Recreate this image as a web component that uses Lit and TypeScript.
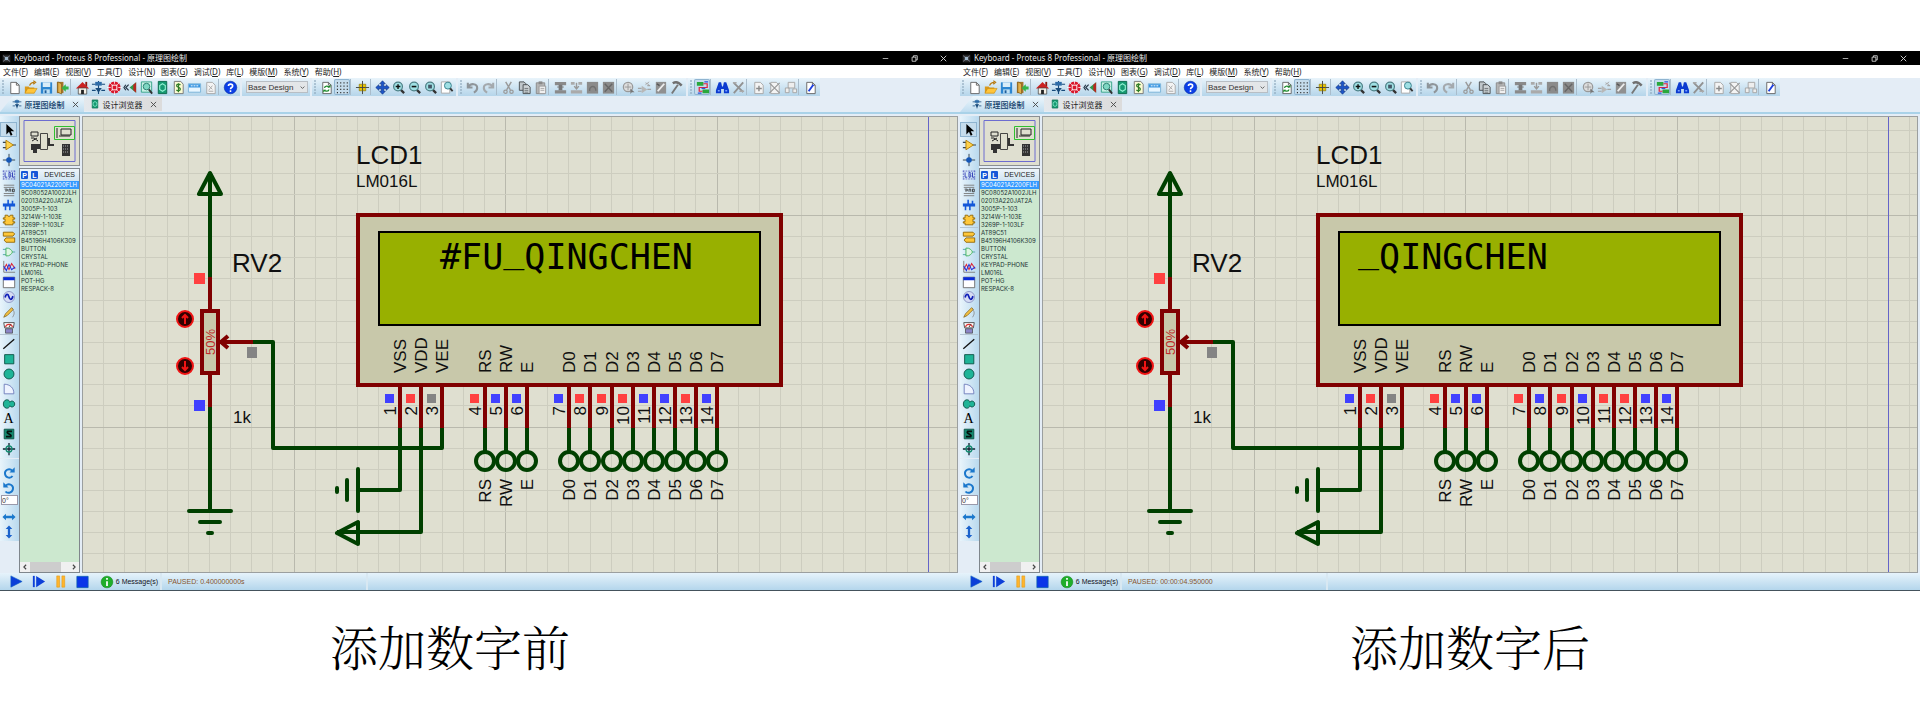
import { LitElement, html, svg, css, nothing } from "lit";
import { customElement, property } from "lit/decorators.js";

const page = svg`<path d="M4 2.5h6l3 3v9H4z" fill="#fff" stroke="#666"/><path d="M10 2.5v3h3" fill="none" stroke="#666"/>`;
const greyPage = svg`<path d="M4 2.5h6l3 3v9H4z" fill="#f4f4f4" stroke="#a8a8a8"/>`;
const lens = (inner: unknown) => svg`<path d="M10 10l4 4" stroke="#333" stroke-width="2.4"/><circle cx="7.500" cy="7" r="4.700" fill="#9fe0e4" stroke="#4d7f86" stroke-width="1.300"/>${inner}`;
const block = (inner: unknown) => svg`<path d="M2 2h12v3.500H2zM2 11h12v3.500H2z" fill="#8a8a8a"/>${inner}`;

const icons: Record<string, unknown> = {
  new: page,
  open: svg`<path d="M2 7h4l1 1h5v6H2z" fill="#d99a1c"/><path d="M2 14l3-5h10l-3 5z" fill="#ffc53a" stroke="#c58a10" stroke-width=".6"/><path d="M7 6c1-3 3-3.500 5-3.500M11 .8l2.500 1.700L11 4.500" fill="none" stroke="#b87a10" stroke-width="1.200"/>`,
  save: svg`<path d="M2 2.500h12v12H2z" fill="#2c86d0"/><path d="M4 2.500h8v5H4z" fill="#d7ecf8"/><path d="M4.500 10h7v4.500h-7z" fill="#bfe0f3"/><path d="M6 11h2v3H6z" fill="#1c5f9c"/>`,
  exit: svg`<path d="M2 2h7v12H2z" fill="#a5762a"/><path d="M3 2l4 2v11l-4-2z" fill="#e3b04a" stroke="#6f4d12" stroke-width=".6"/><path d="M14.500 7h-3V4.500L7 8.500l4.500 4V10h3z" fill="#35b54a"/>`,
  home: svg`<path d="M11 2h2v5h-2z" fill="#8b1a10"/><path d="M1 9l7-7 7 7z" fill="#c22"/><path d="M3.500 8.500h9V15h-9z" fill="#f5f0e6" stroke="#444" stroke-width=".8"/><path d="M6.500 10.500h3V15h-3z" fill="#222"/>`,
  schematic: svg`<path d="M8 1v14M1 4.500h4M11 4.500h4M1 11h4M11 11h4" stroke="#174a7a" stroke-width="1.200"/><path d="M4.500 2h7v4h-7z" fill="#2d6ca8"/><path d="M4.500 8.500h7L8 13.500z" fill="#174a7a"/>`,
  pcb: svg`<circle cx="8" cy="8" r="6.500" fill="#d9162a"/><path d="M5 5h6v6H5z" fill="#fff"/><path d="M6 6h4v4H6z" fill="#d9162a"/><path d="M8 0v4M8 12v4M0 8h4M12 8h4M3 3l2 2M13 3l-2 2M3 13l2-2M13 13l-2-2" stroke="#fff" stroke-width=".8"/>`,
  view3d: svg`<path d="M7 8l7-5.500v11z" fill="#2f9b4a"/><path d="M11 5l3-2.500v11L11 11z" fill="#b52a22"/><path d="M6 5L3 8l3 3M3 5L1 8l2 3" fill="none" stroke="#234" stroke-width="1.200"/>`,
  gerber: svg`<path d="M2.500 2h11v11h-11z" fill="#c8f0e4" stroke="#38a48a"/><circle cx="8" cy="7" r="3.500" fill="#7fd7c2" stroke="#2b7f72"/><path d="M10.500 10l3.500 4.500" stroke="#333" stroke-width="2"/>`,
  explorer: svg`<path d="M3.500 1.500h9v13h-9z" fill="#159a72" stroke="#0b6b4d"/><path d="M8 4l3 2v4l-3 2-3-2V6z" fill="none" stroke="#90f0d0" stroke-width="1.200"/>`,
  bom: svg`<path d="M3.500 1.500h7l2.500 3v10H3.500z" fill="#fbfbd4" stroke="#777"/><path d="M10 5.500C9 4 6 4.200 6 6s4 1.500 4 3.700S7 12 5.800 10.500M8 3.500v9.500" fill="none" stroke="#2f7d26" stroke-width="1.300"/>`,
  serial: svg`<path d="M1.500 4h13v9h-13z" fill="#e8f6ff" stroke="#7ab2d8"/><path d="M2 4.500h12v3.500H2z" fill="#3895e0"/><path d="M4 6.200h2M7 6.200h2M10 6.200h2" stroke="#fff"/>`,
  notes: svg`${greyPage}<path d="M6 6l4 4M10 6l-4 5M6 12h5" stroke="#aaa"/>`,
  help: svg`<circle cx="8" cy="8" r="6.700" fill="#0a3fe8" stroke="#042a9c" stroke-width=".6"/><path d="M5.800 6.500C5.800 3.600 10.300 3.800 10.300 6.300 10.300 8 8 8 8 9.800M8 11v1.800" fill="none" stroke="#fff" stroke-width="1.700"/>`,
  refresh: svg`${page}<path d="M6 8.500C6 6 10 6 10.500 8M10.500 10C10.500 12.500 6.500 12.500 6 10.500" fill="none" stroke="#1d8a2c" stroke-width="1.400"/><path d="M9 8h3.300v-3zM7.500 10.500H4.500v3z" fill="#1d8a2c"/>`,
  grid: svg`<path d="M2 3h12M2 6.500h12M2 10h12M2 13.500h12" stroke="#333" stroke-width="1.200" stroke-dasharray="1.200 2.300"/>`,
  origin: svg`<path d="M8 1v14M1 8h14" stroke="#444"/><path d="M4.500 4.500h7v7h-7z" fill="#e8c400" stroke="#7d6a00" stroke-width=".6"/><path d="M8 4.500v7M4.500 8h7" stroke="#444"/>`,
  pan: svg`<path d="M8 .8l3 3.200H9.300v2.700H12V5l3.200 3L12 11V9.300H9.300V12H11l-3 3.200L5 12h1.700V9.300H4V11L.8 8 4 5v1.700h2.700V4H5z" fill="#1c56c8" stroke="#0a2b78" stroke-width=".6"/>`,
  zoomIn: lens(svg`<path d="M5 7h5M7.500 4.500v5" stroke="#111" stroke-width="1.500"/>`),
  zoomOut: lens(svg`<path d="M5 7h5" stroke="#111" stroke-width="1.700"/>`),
  zoomAll: lens(svg`<path d="M5.500 5h4v4h-4z" fill="#456"/>`),
  zoomArea: svg`<path d="M2.500 2h9v12h-9z" fill="#fff" stroke="#aaa"/><circle cx="9.500" cy="6" r="3.700" fill="#9fe0e4" stroke="#37808c"/><path d="M12 9l2.500 3" stroke="#333" stroke-width="2"/>`,
  undo: svg`<path d="M3 3v5h5M3.500 7.500C6 3 13 3.500 13 8.500 13 11 11 12.500 9.500 13.500" fill="none" stroke="#8f959a" stroke-width="2.200"/>`,
  redo: svg`<path d="M13 3v5H8M12.500 7.500C10 3 3 3.500 3 8.500 3 11 5 12.500 6.500 13.500" fill="none" stroke="#a4a9ad" stroke-width="2.200"/>`,
  cut: svg`<path d="M5 2l5 8.500M11 2L6 10.500" stroke="#9a9a9a" stroke-width="1.500"/><circle cx="4.800" cy="12.500" r="1.800" fill="none" stroke="#9a9a9a" stroke-width="1.300"/><circle cx="11.200" cy="12.500" r="1.800" fill="none" stroke="#9a9a9a" stroke-width="1.300"/>`,
  copy: svg`<path d="M2.500 2h5l2 2v7h-7z" fill="#bfc6ca" stroke="#4a4f52"/><path d="M6.500 5h5l2.500 2.500v7H6.500z" fill="#cdd3d6" stroke="#4a4f52"/><path d="M8 9h4M8 11h4M8 13h4" stroke="#5a5f62" stroke-width=".8"/>`,
  paste: svg`<path d="M3.500 3h9v11.500h-9z" fill="#b5b5b5" stroke="#8c8c8c"/><path d="M6 1.500h4v3H6z" fill="#888"/><path d="M6.500 6.500h7v8h-7z" fill="#f0f0f0" stroke="#999"/><path d="M8 9h4M8 11h4" stroke="#aaa"/>`,
  blockCopy: block(svg`<path d="M6 5h4v6H6z" fill="#777"/><path d="M4.500 7.500h7" stroke="#777"/>`),
  blockMove: svg`<path d="M2 2h4v3H2zM10 2h4v3h-4zM2 11h12v3.500H2z" fill="#aaa"/><path d="M8 3v6M5.500 6.500L8 9.500l2.500-3" fill="none" stroke="#999" stroke-width="1.500"/>`,
  blockRotate: svg`<path d="M2 2h12v12.500H2z" fill="#8b8b8b"/><path d="M5 11.500C4 6 12 5 11.500 11.500" fill="none" stroke="#707070" stroke-width="1.500"/>`,
  blockDelete: svg`<path d="M2 2h12v12.500H2z" fill="#8b8b8b"/><path d="M4 4l8 8.500M12 4l-8 8.500" stroke="#666" stroke-width="1.500"/>`,
  pick: svg`<circle cx="7.500" cy="7.500" r="5" fill="#ddd" stroke="#999" stroke-width="1.300"/><path d="M4 7.500h7M7.500 4v7" stroke="#999"/><path d="M10 9l4.500 4h-3l-1.500 2z" fill="#777"/>`,
  makeDevice: svg`<path d="M1 9h4M1 12h4M11 10h4M11 6h3" stroke="#a5a5a5" stroke-width="1.300"/><path d="M5 6l6 4-6 4z" fill="#b8b8b8"/><path d="M9 5l4-3M9 3l4 2" stroke="#aaa"/>`,
  packaging: svg`<path d="M3 2h11v12.500H3z" fill="#909090"/><path d="M5 12l7-8" stroke="#eee" stroke-width="2"/><path d="M4 4l3 2" stroke="#555" stroke-width="1.500"/>`,
  decompose: svg`<path d="M4 3.500C8 1 11 3 13.500 6" fill="none" stroke="#707070" stroke-width="2.600"/><path d="M9.500 5L3 14.500" stroke="#777" stroke-width="2"/>`,
  autoroute: svg`<path d="M2 2h7v4H2zM8 10h7v4H8z" fill="#29a83c"/><path d="M9 4h4v4H4.500v4H8" fill="none" stroke="#e0233c" stroke-width="1.300"/><path d="M3 14h4M10 2h4M11 9H7" stroke="#2b56dc" stroke-width="1.300"/>`,
  search: svg`<path d="M4 2.500h2.500L7.500 7h1L9.500 2.500H12l3 8.500v3H9.500V9.500h-3V14H1v-3z" fill="#0c3bd0"/><path d="M3 11.500h2M11 11.500h2" stroke="#7fa4ff" stroke-width="1.500"/>`,
  property: svg`<path d="M3 3l10 10M13 2.500L3 14" stroke="#929292" stroke-width="2"/><path d="M2 3h4M9 12h5" stroke="#aaa" stroke-width="1.500"/>`,
  sheetNew: svg`${greyPage}<path d="M5.500 9h6M8.500 6v6" stroke="#8a8a8a" stroke-width="1.500"/>`,
  sheetDelete: svg`${greyPage}<path d="M2.500 3l11 11M13.500 3l-11 11" stroke="#999" stroke-width="1.300"/>`,
  sheetExit: svg`<path d="M5.500 2.500h7v6h-7zM2.500 8.500h4v5h-4zM10.500 9.500h4v4h-4z" fill="#eee" stroke="#a5a5a5"/>`,
  rules: svg`${page}<path d="M6 12l5-7" stroke="#1c3fe0" stroke-width="2"/>`,

  select: svg`<path d="M5 1v12l3-3 2 4.500 2-1L10 9.500h4z" fill="#000"/>`,
  component: svg`<path d="M1 5h4M1 11h4M12 8h4" stroke="#345" stroke-width="1.200"/><path d="M4.500 2.500L13 8l-8.500 5.500z" fill="#ffd24a" stroke="#b07a00"/>`,
  junction: svg`<path d="M8 1v14M1 8h14" stroke="#234"/><circle cx="8" cy="8" r="3.200" fill="#1357b8"/>`,
  label: svg`<path d="M1 3.500h14M1 12.500h14M1.500 3v10M14.500 3v10" stroke="#5a62c4" stroke-dasharray="2 1"/><path d="M3.500 5v5.500h2.500M8 5v5.500h1.500l.8-1.300-.8-1.500.6-1.300L9.300 5zM12 5v5.500h2" fill="none" stroke="#3440b8" stroke-width="1.100"/>`,
  script: svg`<path d="M2 2.500h12M2 5h12M2 12h12M2 14.500h12" stroke="#777"/><path d="M3 7h3v2H3.500M8 10V7h2v3M12 7h2v3h-2z" fill="none" stroke="#333"/>`,
  bus: svg`<path d="M1 8h14" stroke="#1458d8" stroke-width="3.500"/><path d="M4 8v6M9 8v6M7 2v6M12 3v5" stroke="#1458d8" stroke-width="1.800"/>`,
  subcircuit: svg`<path d="M3.500 2.500h3c0 2 3 2 3 0h3v3h2v1.500h-2v3h2v1.500h-2v2h-9v-2h-2V10h2V7h-2V5.500h2z" fill="#ffc83a" stroke="#8f6400"/>`,
  terminal: svg`<path d="M1.500 2.500h11l2 2-2 2.500h-11zM4.500 9h10v5h-10l-2-2.500z" fill="#ffc83a" stroke="#8f6400"/>`,
  pin: svg`<path d="M1 5h4M1 11h4M12 8h3" stroke="#5aa" stroke-width="1.100"/><path d="M4.500 3.500C9 3 11 6 12 8c-1 2-3 5-7.500 4.500z" fill="#dff5e4" stroke="#3cae58"/>`,
  graph: svg`<path d="M2 1v13h13" fill="none" stroke="#777"/><path d="M2 11l3-6 3 6 3-7 4 6" fill="none" stroke="#d23" stroke-width="1.200"/><path d="M2 7l3 5 3-7 3 6 4-3" fill="none" stroke="#23d" stroke-width="1.200"/>`,
  popup: svg`<path d="M1.500 2.500h13v12h-13z" fill="#fff" stroke="#666"/><path d="M1.500 2.500h13V6h-13z" fill="#0a2cd8"/>`,
  generator: svg`<circle cx="8" cy="8" r="6.300" fill="#d6dcf4" stroke="#8892c0"/><path d="M3.500 8.500C5 3.500 7 4.500 8 8s3 4 4.500-1" fill="none" stroke="#1020b8" stroke-width="2"/>`,
  probe: svg`<path d="M2 14l2-4 7-7 2 2-7 7z" fill="#f4c040" stroke="#7a5a10" stroke-width=".8"/><path d="M12 5c3 3 2 6 0 9" fill="none" stroke="#888"/>`,
  instrument: svg`<path d="M2 3h12l-1 6H3z" fill="#fff" stroke="#444"/><path d="M4 8C5 4 11 4 12 8" fill="none" stroke="#d33" stroke-width="1.200"/><path d="M4 10h8v5H4z" fill="#8c86c8" stroke="#444" stroke-width=".8"/><path d="M8 8l2-3" stroke="#222"/>`,
  line: svg`<path d="M1.500 13.500L14 2.500" stroke="#111" stroke-width="1.500"/>`,
  square: svg`<path d="M3 3h10.500v10.500H3z" fill="#1fb497" stroke="#0b4f42"/>`,
  circle: svg`<circle cx="8" cy="8" r="5.700" fill="#1fb497" stroke="#0b4f42"/>`,
  arc: svg`<path d="M2.500 2.500v11h11C14 7 9 2.500 2.500 2.500z" fill="#eef3ff" stroke="#6a78b8"/>`,
  path: svg`<path d="M9 6C8 1.500 1.500 2.500 1.500 8s6.500 6.500 7.500 2c1.500 2.500 5.500 1.500 5.500-2S10.500 3.500 9 6z" fill="#1fb497" stroke="#0b4f42"/>`,
  symbol: svg`<path d="M2.500 2.500h11v11h-11z" fill="#148a70" stroke="#0b4f42"/><path d="M11.500 5H6.500C4 8 12 8 10 11H4.500" fill="none" stroke="#04110e" stroke-width="2"/>`,
  marker: svg`<path d="M8 1v14M1 8h14" stroke="#123" stroke-width="1.500"/><circle cx="8" cy="8" r="3.400" fill="none" stroke="#148a70" stroke-width="1.500"/>`,
  cw: svg`<path d="M12 5.500C8 1.500 2.500 5 3.500 9.500S10 14.500 12 11.500" fill="none" stroke="#1b78cc" stroke-width="2.200"/><path d="M14.500 1.500v6h-6z" fill="#1b78cc"/>`,
  ccw: svg`<path d="M4 5.500C8 1.500 13.500 5 12.500 9.500S6 14.500 4 12" fill="none" stroke="#1b78cc" stroke-width="2.200"/><path d="M1.500 1.500v6h6z" fill="#1b78cc"/>`,
  flipX: svg`<path d="M.5 8l4-3.800v2.500h7V4.200l4 3.800-4 3.800V9.300h-7v2.500z" fill="#1b78cc"/>`,
  flipY: svg`<path d="M8 .5l3.800 4H9.300v7h2.500l-3.800 4-3.800-4h2.500v-7H4.200z" fill="#1b62cc"/>`,

  play: svg`<path d="M2 2l12 6-12 6z" fill="#0c3fd8" stroke="#0a5fc0" stroke-width=".6"/>`,
  step: svg`<path d="M2 2h2v12H2z" fill="#0c3fd8"/><path d="M5.500 2L15 8l-9.500 6z" fill="#0c3fd8"/>`,
  pause: svg`<path d="M4 2h3v12H4zM9.500 2h3v12h-3z" fill="#ffb52e" stroke="#e39a12" stroke-width=".6"/>`,
  stop: svg`<path d="M2 2.500h12v12H2z" fill="#0a35e8" stroke="#0a5fb0" stroke-width=".8"/>`,
  info: svg`<circle cx="8" cy="8" r="6.700" fill="#1fae2a" stroke="#128019" stroke-width=".6"/><path d="M8 3.500v2M8 7v5.500" stroke="#fff" stroke-width="2"/>`,
  app: svg`<path d="M1 1h14v14H1z" fill="#222"/><path d="M2 3l4 3M14 3l-4 3M2 13l4-3M14 13l-4-3" stroke="#889" stroke-width="1.500"/><path d="M5 5h6v6H5z" fill="#9db4c8"/>`,
  minimize: svg`<path d="M4 8h8" stroke="#bbb" stroke-width="1.300"/>`,
  restore: svg`<path d="M4.500 6h5.500v6H4.500zM6.500 6V4H12v6h-2" fill="none" stroke="#ddd" stroke-width="1.200"/>`,
  close: svg`<path d="M4 4l8 8M12 4l-8 8" stroke="#ddd" stroke-width="1.300"/>`,
  tabClose: svg`<path d="M2 2l12 12M14 2L2 14" stroke="#444" stroke-width="2"/>`,
};

const icon = (name: string) =>
  html`<svg class="icon" viewBox="0 0 16 16" aria-hidden="true">${icons[name]}</svg>`;

const menus = [
  ["文件", "F"], ["编辑", "E"], ["视图", "V"], ["工具", "T"], ["设计", "N"], ["图表", "G"],
  ["调试", "D"], ["库", "L"], ["模版", "M"], ["系统", "Y"], ["帮助", "H"],
];

const fileTools = [
  ["new", "open", "save", "exit"],
  ["home", "schematic", "pcb", "view3d", "gerber", "explorer", "bom", "serial", "notes"],
  ["help"],
];
const otherTools = [
  [["refresh", "grid"], ["origin"], ["pan", "zoomIn", "zoomOut", "zoomAll", "zoomArea"]],
  [["undo", "redo"], ["cut", "copy", "paste"], ["blockCopy", "blockMove", "blockRotate", "blockDelete"], ["pick", "makeDevice", "packaging", "decompose"]],
  [["autoroute"], ["search", "property"], ["sheetNew", "sheetDelete", "sheetExit"], ["rules"]],
];
const sideTools = [
  ["select", "component", "junction", "label", "script", "bus", "subcircuit"],
  ["terminal", "pin", "graph", "popup", "generator", "probe", "instrument"],
  ["line", "square", "circle", "arc", "path", "text", "symbol", "marker"],
];
const pressed = new Set(["grid", "autoroute", "select"]);

const devices = [
  "9C04021A2200FLH", "9C08052A1002JLH", "02013A220JAT2A", "3005P-1-103", "3214W-1-103E",
  "3269P-1-103LF", "AT89C51", "B45196H4106K309", "BUTTON", "CRYSTAL", "KEYPAD-PHONE",
  "LM016L", "POT-HG", "RESPACK-8",
];

/* Sheet geometry: the grid step and the column of each display pin. */
const STEP = 21.15;
const PIN_X = 400;
const pins = [
  ["VSS", 0], ["VDD", 1], ["VEE", 2], ["RS", 4], ["RW", 5], ["E", 6], ["D0", 8], ["D1", 9],
  ["D2", 10], ["D3", 11], ["D4", 12], ["D5", 13], ["D6", 14], ["D7", 15],
] as [string, number][];
const levelColor: Record<string, string> = { r: "#ff4040", b: "#4040ff", g: "#848484" };

@customElement("schematic-sheet")
class SchematicSheet extends LitElement {
  @property() lcd = "";
  @property({ type: Number }) column = 0;
  @property() levels = "";

  static styles = css`
    :host { display: block; }
    .sheet { display: block; width: 100%; height: auto; background: #dfdfd0; }
    .minor { stroke: #cdcdbf; stroke-width: 1; }
    .major { stroke: #b9b9ad; stroke-width: 1; }
    .edge { stroke: #6464c8; stroke-width: 1; }
    .wire { fill: none; stroke: #004000; stroke-width: 4; stroke-linejoin: round; }
    .round { stroke-linecap: round; }
    .lead { fill: none; stroke: #800000; stroke-width: 4; }
    .part { fill: #c8c8aa; stroke: #800000; stroke-width: 4; }
    .glass { fill: #98b000; stroke: #000; stroke-width: 2; }
    .text { font: 17px "Liberation Sans", Arial, sans-serif; fill: #101010; }
    .big { font-size: 26px; }
    .ratio { font-size: 13px; fill: #c02828; }
    .digits { font: 35px "DejaVu Sans Mono", monospace; fill: #000; }
    .low { baseline-shift: 7px; }
    .knob { fill: #300; stroke: #f01414; stroke-width: 2; }
    .arrow { fill: none; stroke: #f01414; stroke-width: 2; }
  `;

  private grid() {
    const out = [];
    for (let i = 0; i <= 42; i++) {
      const x = Math.round(82 + i * STEP) + 0.5;
      const cls = i % 10 === 0 ? "major" : "minor";
      if (x < 958) out.push(svg`<line class=${cls} x1=${x} x2=${x} y1="116" y2="573"></line>`);
    }
    for (let i = -4; i <= 16; i++) {
      const y = Math.round(215 + i * STEP) + 0.5;
      const cls = i % 10 === 0 ? "major" : "minor";
      out.push(svg`<line class=${cls} x1="82" x2="958" y1=${y} y2=${y}></line>`);
    }
    return out;
  }

  private label(text: string, x: number, y: number, anchor: string, cls = "text") {
    return svg`<text class=${cls} text-anchor=${anchor} transform="translate(${x} ${y}) rotate(-90)">${text}</text>`;
  }

  private pin([name, col]: [string, number], i: number) {
    const x = Math.round(PIN_X + col * STEP);
    return svg`
      <line class="lead" x1=${x} x2=${x} y1="385" y2="428"></line>
      <rect x=${x - 15} y="394" width="9" height="9" fill=${levelColor[this.levels[i]]}></rect>
      ${this.label(String(i + 1), x - 4, 406, "end")}
      ${col > 3
        ? svg`<path class="wire" d="M${x} 428V451"></path>
            <circle class="wire" cx=${x} cy="461" r="9"></circle>
            ${this.label(name, x + 6, 479, "end")}`
        : nothing}`;
  }

  render() {
    return html`<svg class="sheet" viewBox="83 117 874 455" role="img" aria-label="LCD1 LM016L">
      ${this.grid()}
      <line class="edge" x1="928.5" x2="928.5" y1="116" y2="573"></line>

      <path class="wire" d="M210 174V277M210 173L199 194H221ZM210 407V511"></path>
      <path class="wire round" d="M189 511H231M200 522H220M208 533H212"></path>
      <path class="lead" d="M210 277V311M210 373V407M221 342H253M228 336L221 342L228 348"></path>
      <path class="wire" d="M253 342H273V448H442V428"></path>
      <rect class="part" x="202" y="311" width="16" height="62"></rect>
      ${this.label("50%", 215, 355, "start", "text ratio")}
      <rect x="194" y="273" width="11" height="11" fill="#ff4040"></rect>
      <rect x="194" y="400" width="11" height="11" fill="#4040ff"></rect>
      <rect x="247" y="347" width="10" height="11" fill="#848484"></rect>
      <circle class="knob" cx="185" cy="319" r="8"></circle>
      <path class="arrow" d="M185 324V315M182 318L185 315L188 318"></path>
      <circle class="knob" cx="185" cy="366" r="8"></circle>
      <path class="arrow" d="M185 361V370M182 367L185 370L188 367"></path>
      <text class="text big" x="232" y="272">RV2</text>
      <text class="text" x="233" y="423">1k</text>

      <text class="text big" x="356" y="164">LCD1</text>
      <text class="text" x="356" y="187">LM016L</text>
      ${pins.map((p, i) => this.pin(p, i))}
      <rect class="part" x="358" y="215" width="423" height="170"></rect>
      <rect class="glass" x="379" y="232" width="381" height="93"></rect>
      ${pins.map(([name, col]) => this.label(name, Math.round(PIN_X + col * STEP) + 6, 373, "start"))}
      <text class="digits" x=${Math.round(398 + this.column * STEP)} y="269">${[...this.lcd].map((c) =>
        c === "_" ? svg`<tspan class="low">_</tspan>` : svg`<tspan>${c}</tspan>`)}</text>

      <path class="wire" d="M400 428V490H358M421 428V532H337M358 522V544L337 533Z"></path>
      <path class="wire round" d="M358 469V511M347 480V500M337 488V492"></path>
    </svg>`;
  }
}

@customElement("proteus-window")
class ProteusWindow extends LitElement {
  @property() lcd = "";
  @property({ type: Number }) column = 0;
  @property() levels = "";
  @property() time = "";

  static styles = css`
    :host {
      display: block;
      background: #e4edf6;
      font: 8px "Noto Sans", "Noto Sans CJK SC", sans-serif;
      color: #222;
      border-bottom: 1px solid #44525c;
    }
    * { box-sizing: border-box; }
    button { border: 0; padding: 0; margin: 0; background: none; font: inherit; color: inherit; display: flex; align-items: center; justify-content: center; }
    .icon { display: block; width: 15px; height: 15px; flex: none; }

    .title { display: flex; align-items: center; height: 14px; background: #000; color: #e8e8e8; padding: 0 2px; }
    .title .icon { width: 9px; height: 9px; }
    .name { font-size: 8px; line-height: 14px; margin: 0 auto 0 3px; font-weight: 400; white-space: nowrap; }
    .title button { width: 29px; height: 14px; }
    .title button .icon { width: 11px; height: 11px; }

    .menu { display: flex; height: 13px; gap: 6px; padding: 0 3px; background: #fff; white-space: nowrap; }
    .menu button { line-height: 13px; }
    .key { text-decoration: underline; }

    .bars { display: flex; gap: 2px; height: 18px; }
    .bar { display: flex; align-items: center; background: linear-gradient(#e9f4fb, #b5d5ea); padding-right: 2px; }
    .grip { align-self: stretch; width: 6px; margin: 2px 0; background: radial-gradient(circle at 3px 1px, #8fa9bd 1px, transparent 1px) 0 0 / 6px 3px; opacity: .6; }
    .set { display: flex; }
    .set + .set { border-left: 1px solid #a9bccb; padding-left: 3px; }
    .set button { width: 16px; height: 16px; border-radius: 2px; }
    .on { background: #c5dcec; box-shadow: inset 0 0 0 1px #8fb4d0; }
    .design { width: 68px; padding: 0 2px 0 4px; }
    select { width: 100%; height: 12px; appearance: none; border: 1px solid #b8bec4; border-radius: 0; background: #e3e6e8; font: 8px "Liberation Sans", sans-serif; color: #333; padding: 0 0 0 1px; }
    .combo { display: grid; flex: 1; align-items: center; }
    .combo > * { grid-area: 1 / 1; }
    .chevron { justify-self: end; width: 5px; height: 5px; margin-right: 3px; pointer-events: none; }

    .tabs { display: flex; height: 16px; align-items: stretch; }
    .tab { gap: 3px; white-space: nowrap; }
    .tab .icon { width: 10px; height: 10px; }
    .tab .x { width: 7px; height: 7px; margin-left: 4px; }
    .tab.active { width: 84px; padding-left: 6px; background: linear-gradient(#eef7fc, #c0ddf0); color: #12406a; font-weight: 500; clip-path: polygon(13px 0, 100% 0, 100% 100%, 0 100%); }
    .tab.idle { width: 78px; height: 14px; margin-top: 1px; padding-left: 0; background: linear-gradient(90deg, #e4e8ec, #dcdcdc); }

    .body { display: flex; padding: 2px 2px 0 0; background: #e4edf6; border-top: 2px solid #a9d2e8; }
    .rail { width: 19px; flex: none; }
    .strip { background: linear-gradient(90deg, #e8f4fb, #b9d9ee); padding: 6px 1px 2px 0; display: flex; flex-direction: column; }
    .strip button { width: 17px; height: 15px; }
    .strip .icon { width: 14px; height: 14px; }
    .break { height: 2px; border-top: 1px solid #b5c6d4; }
    .letter { font: 14px "Liberation Serif", serif; color: #000; }
    .turn { padding-top: 6px; margin-top: 1px; }
    .angle { width: 17px; height: 10px; border: 1px solid #99a; padding: 0; margin: 0 0 4px 1px; font: 7px "Liberation Sans", sans-serif; color: #333; background: #fff; }

    .side { width: 61px; flex: none; display: flex; flex-direction: column; gap: 2px; margin-right: 2px; }
    .overview { display: block; width: 100%; height: auto; border: 1px solid #8a8f94; background: #dfdfd0; }
    .list { flex: 1; display: flex; flex-direction: column; border: 1px solid #7f868c; background: #cce8cf; min-height: 0; }
    .head { display: flex; align-items: center; gap: 3px; height: 12px; background: linear-gradient(#eef6fb, #cfe3f1); padding: 0 4px 0 1px; }
    .head button { width: 7px; height: 8px; background: #1556d8; color: #fff; font: bold 7px "Liberation Sans", sans-serif; border-radius: 1px; }
    .head span { margin-left: auto; font: 7px/12px "Liberation Sans", sans-serif; }
    ul { list-style: none; margin: 0; padding: 0; flex: 1; }
    li { font: 6px/8px Inter, "Liberation Sans", sans-serif; padding-left: 1px; color: #233; white-space: nowrap; }
    li.sel { background: #3399ff; color: #fff; }
    .scroll { display: flex; height: 10px; background: #f0f0f0; justify-content: space-between; }
    .scroll button { width: 10px; }
    .scroll .icon { width: 6px; height: 6px; }
    .thumb { width: 31px; margin-right: auto; background: #cdcdcd; }

    .sheet { flex: 1; min-width: 0; border: 1px solid #9b9f9f; }

    .status { display: flex; align-items: center; height: 17px; background: linear-gradient(#e6f3fb, #b4d6ec); }
    .sim { display: flex; width: 98px; padding-left: 5px; }
    .sim button { width: 22px; height: 16px; }
    .messages { gap: 2px; width: 62px; font: 7px "Liberation Sans", sans-serif; color: #112; white-space: nowrap; }
    .messages .icon { width: 14px; height: 14px; }
    .state { width: 208px; padding-left: 6px; font: 7px "Liberation Sans", sans-serif; color: #86552e; border-left: 2px solid #d8e8f2; border-right: 2px solid #d8e8f2; line-height: 17px; }
  `;

  private buttons(names: string[]) {
    return names.map((n) => html`<button class=${pressed.has(n) ? "on" : ""} aria-label=${n}>
      ${n === "text" ? html`<span class="letter">A</span>` : icon(n)}
    </button>`);
  }

  private bar(sets: string[][]) {
    return html`<div class="bar"><span class="grip"></span>
      ${sets.map((s) => html`<div class="set">${this.buttons(s)}</div>`)}</div>`;
  }

  render() {
    return html`
      <header class="title">
        ${icon("app")}
        <h2 class="name">Keyboard - Proteus 8 Professional - 原理图绘制</h2>
        <button aria-label="Minimize">${icon("minimize")}</button>
        <button aria-label="Restore">${icon("restore")}</button>
        <button aria-label="Close">${icon("close")}</button>
      </header>
      <nav class="menu">
        ${menus.map(([t, k]) => html`<button>${t}(<span class="key">${k}</span>)</button>`)}
      </nav>
      <div class="bars">
        ${this.bar(fileTools)}
        <div class="bar design">
          <label class="combo">
            <select aria-label="Design variant"><option>Base Design</option></select>
            <svg class="chevron" viewBox="0 0 8 8"><path d="M1 2.500l3 3 3-3" fill="none" stroke="#555" stroke-width="1.400"></path></svg>
          </label>
        </div>
        ${otherTools.map((sets) => this.bar(sets))}
      </div>
      <div class="tabs">
        <button class="tab active">${icon("schematic")}<span>原理图绘制</span><svg class="x" viewBox="0 0 16 16">${icons.tabClose}</svg></button>
        <button class="tab idle">${icon("explorer")}<span>设计浏览器</span><svg class="x" viewBox="0 0 16 16">${icons.tabClose}</svg></button>
      </div>
      <div class="body">
        <div class="rail">
          <div class="strip">
            ${sideTools.map((s, i) => html`${i ? html`<span class="break"></span>` : nothing}${this.buttons(s)}`)}
          </div>
          <div class="strip turn">
            ${this.buttons(["cw", "ccw"])}
            <input class="angle" aria-label="Angle" value="0°">
            ${this.buttons(["flipX", "flipY"])}
          </div>
        </div>
        <aside class="side">
          <svg class="overview" viewBox="0 0 59 48" aria-hidden="true">
            <path d="M4 3.500h51v41H4z" fill="none" stroke="#6c6cd0"></path>
            <path d="M34.500 9.500h20v13h-20z" fill="none" stroke="#30c030"></path>
            <path d="M20.500 16.500h7v16h-7z" fill="none" stroke="#444"></path>
            <path d="M11 15h7v4h-7zM11 21h3l4 3M12 24l5-3M41 12h10v6H41zM37 11v10M39 19h11" fill="none" stroke="#222"></path>
            <path d="M11 27h9v5h-3v4h-4v-3h-2zM28 21h2v6h4v2h-6zM42 27h8v12h-8z" fill="#333"></path>
            <path d="M43 29h6M43 32h6M43 35h6" stroke="#aaa" stroke-dasharray="1 1"></path>
          </svg>
          <section class="list">
            <div class="head"><button>P</button><button>L</button><span>DEVICES</span></div>
            <ul>${devices.map((d, i) => html`<li class=${i ? "" : "sel"}>${d}</li>`)}</ul>
            <div class="scroll">
              <button aria-label="Scroll left"><svg class="icon" viewBox="0 0 8 8"><path d="M5.500 1l-3 3 3 3" fill="none" stroke="#444" stroke-width="1.500"></path></svg></button>
              <span class="thumb"></span>
              <button aria-label="Scroll right"><svg class="icon" viewBox="0 0 8 8"><path d="M2.500 1l3 3-3 3" fill="none" stroke="#444" stroke-width="1.500"></path></svg></button>
            </div>
          </section>
        </aside>
        <schematic-sheet class="sheet" .lcd=${this.lcd} .column=${this.column} .levels=${this.levels}></schematic-sheet>
      </div>
      <footer class="status">
        <div class="sim">${this.buttons(["play", "step", "pause", "stop"])}</div>
        <button class="messages">${icon("info")}<span>6 Message(s)</span></button>
        <span class="state">PAUSED: ${this.time}</span>
      </footer>`;
  }
}

@customElement("app-root")
class AppRoot extends LitElement {
  static styles = css`
    :host { display: block; background: #fff; }
    .pair { display: grid; grid-template-columns: 1fr 1fr; padding: 51px 0 24px; }
    .shot { margin: 0; min-width: 0; }
    .caption { padding-top: 19px; text-align: center; font: 300 48px/72px "Noto Serif CJK SC", "Noto Sans CJK SC", serif; color: #000; }
    .before { padding-right: 60px; }
    .after { padding-left: 60px; }
  `;

  render() {
    return html`<main class="pair">
      <figure class="shot">
        <proteus-window lcd="#FU_QINGCHEN" column="2" levels="brgrbbbrrrbbrb" time="0.400000000s"></proteus-window>
        <figcaption class="caption before">添加数字前</figcaption>
      </figure>
      <figure class="shot">
        <proteus-window lcd="_QINGCHEN" column="0" levels="brgrbbrbrbrrbb" time="00:00:04.950000"></proteus-window>
        <figcaption class="caption after">添加数字后</figcaption>
      </figure>
    </main>`;
  }
}
